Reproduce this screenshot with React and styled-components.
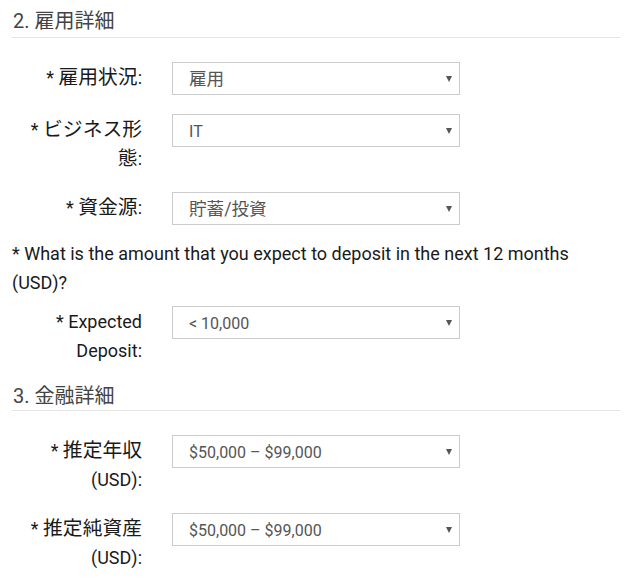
import React from "react"
import styled, { createGlobalStyle } from "styled-components"

const GlobalStyle = createGlobalStyle`
  body {
    margin: 0;
    background: #fff;
    font-family: Roboto, "Noto Sans CJK JP", sans-serif;
  }
`

const Page = styled.div`
  padding: 9px 5px 0 12px;
`

const SectionTitle = styled.h3`
  margin: 0 0 24px;
  padding: 0 0 ${p => p.$pad || 4}px 1px;
  font-size: 20px;
  line-height: 24px;
  font-weight: 400;
  color: #444;
  border-bottom: 1px solid #e5e5e5;
`

const Row = styled.div`
  display: flex;
  align-items: flex-start;
  margin-bottom: ${p => p.$space ?? 19}px;
`

const Label = styled.label`
  width: 130px;
  margin-right: 30px;
  padding-top: 2px;
  text-align: right;
  font-size: 18px;
  line-height: 28.5px;
  color: #1a1a1a;
`

// japanese glyphs on the original page come out a bit larger than the latin ones
const Jp = styled.span`
  font-size: 1.1em;
  vertical-align: top;
`

const Select = styled.div`
  position: relative;
  box-sizing: border-box;
  width: 288px;
  height: 33px;
  padding: 0 30px 0 16px;
  border: 1px solid #ccc;
  background: #fff;
  font-size: 16px;
  line-height: 33px;
  color: #555;
  white-space: nowrap;

  &::after {
    content: "";
    position: absolute;
    right: 7px;
    top: 13px;
    border-left: 3.5px solid transparent;
    border-right: 3.5px solid transparent;
    border-top: 6px solid #555;
  }
`

const Question = styled.p`
  margin: 0 0 9px;
  font-size: 18px;
  line-height: 28.5px;
  color: #1a1a1a;
`

const Field = ({ label, value, space }) => (
  <Row $space={space}>
    <Label>{label}</Label>
    <Select>{value}</Select>
  </Row>
)

export default function App() {
  return (
    <Page>
      <GlobalStyle />
      <SectionTitle>2. 雇用詳細</SectionTitle>
      <Field label={<>* <Jp>雇用状況</Jp>:</>} value={<Jp>雇用</Jp>} />
      <Field label={<>* <Jp>ビジネス形態</Jp>:</>} value="IT" />
      <Field label={<>* <Jp>資金源</Jp>:</>} value={<Jp>貯蓄/投資</Jp>} space={15} />
      <Question>
        * What is the amount that you expect to deposit in the next 12 months (USD)?
      </Question>
      <Field label="* Expected Deposit:" value="< 10,000" />
      <SectionTitle $pad={2}>3. 金融詳細</SectionTitle>
      <Field label={<>* <Jp>推定年収</Jp> (USD):</>} value="$50,000 – $99,000" />
      <Field label={<>* <Jp>推定純資産</Jp> (USD):</>} value="$50,000 – $99,000" />
    </Page>
  )
}
